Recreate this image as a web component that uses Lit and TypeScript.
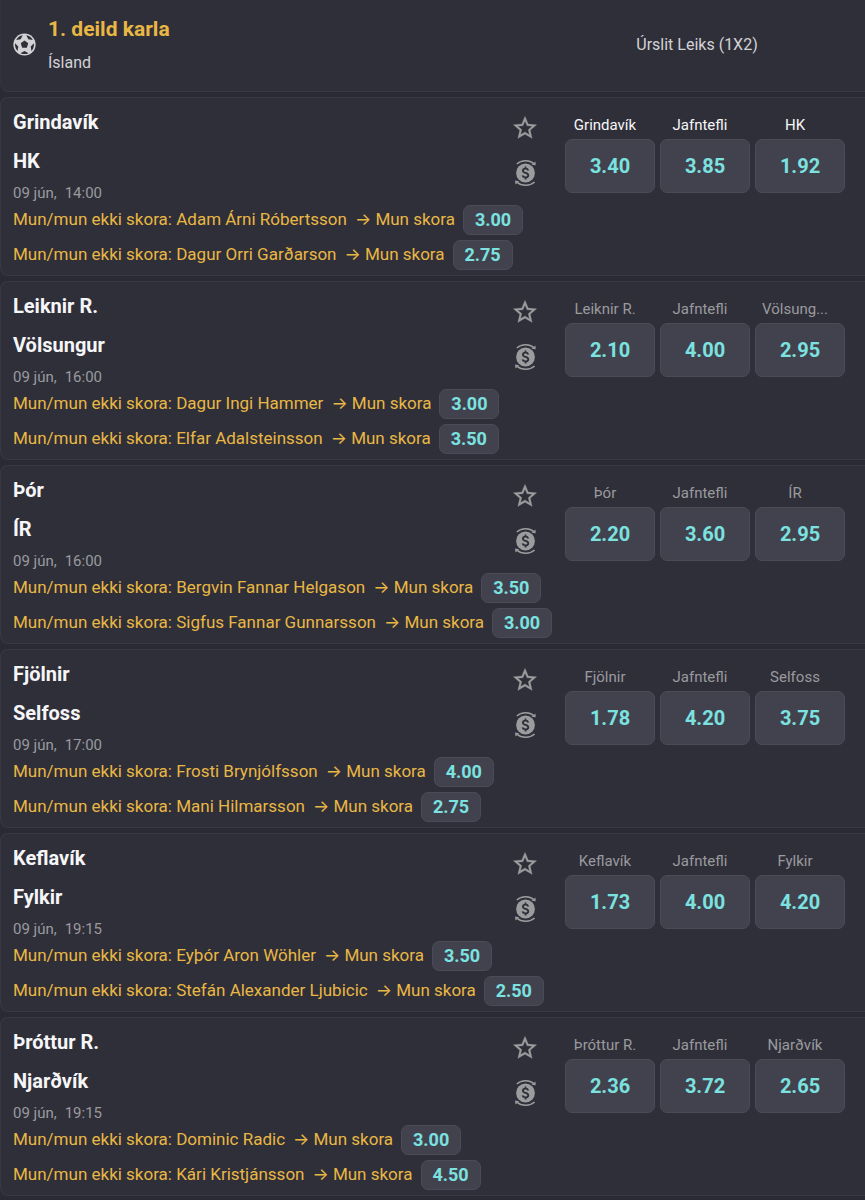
import { LitElement, html, css, svg } from "lit";
import { customElement, property } from "lit/decorators.js";

interface Prop {
  player: string;
  odds: string;
}

interface Match {
  home: string;
  away: string;
  date: string;
  time: string;
  live?: boolean;
  labels: string[];
  odds: string[];
  props: Prop[];
}

const MATCHES: Match[] = [
  {
    home: "Grindavík", away: "HK", date: "09 jún,", time: "14:00", live: true,
    labels: ["Grindavík", "Jafntefli", "HK"], odds: ["3.40", "3.85", "1.92"],
    props: [{ player: "Adam Árni Róbertsson", odds: "3.00" }, { player: "Dagur Orri Garðarson", odds: "2.75" }],
  },
  {
    home: "Leiknir R.", away: "Völsungur", date: "09 jún,", time: "16:00",
    labels: ["Leiknir R.", "Jafntefli", "Völsung..."], odds: ["2.10", "4.00", "2.95"],
    props: [{ player: "Dagur Ingi Hammer", odds: "3.00" }, { player: "Elfar Adalsteinsson", odds: "3.50" }],
  },
  {
    home: "Þór", away: "ÍR", date: "09 jún,", time: "16:00",
    labels: ["Þór", "Jafntefli", "ÍR"], odds: ["2.20", "3.60", "2.95"],
    props: [{ player: "Bergvin Fannar Helgason", odds: "3.50" }, { player: "Sigfus Fannar Gunnarsson", odds: "3.00" }],
  },
  {
    home: "Fjölnir", away: "Selfoss", date: "09 jún,", time: "17:00",
    labels: ["Fjölnir", "Jafntefli", "Selfoss"], odds: ["1.78", "4.20", "3.75"],
    props: [{ player: "Frosti Brynjólfsson", odds: "4.00" }, { player: "Mani Hilmarsson", odds: "2.75" }],
  },
  {
    home: "Keflavík", away: "Fylkir", date: "09 jún,", time: "19:15",
    labels: ["Keflavík", "Jafntefli", "Fylkir"], odds: ["1.73", "4.00", "4.20"],
    props: [{ player: "Eyþór Aron Wöhler", odds: "3.50" }, { player: "Stefán Alexander Ljubicic", odds: "2.50" }],
  },
  {
    home: "Þróttur R.", away: "Njarðvík", date: "09 jún,", time: "19:15",
    labels: ["Þróttur R.", "Jafntefli", "Njarðvík"], odds: ["2.36", "3.72", "2.65"],
    props: [{ player: "Dominic Radic", odds: "3.00" }, { player: "Kári Kristjánsson", odds: "4.50" }],
  },
];

@customElement("match-card")
class MatchCard extends LitElement {
  @property({ attribute: false }) match!: Match;

  static styles = css`
    :host { display: block; }
    .card {
      display: flex;
      align-items: flex-start;
      padding: 5px 20px 5px 12px;
      border: 1px solid #393943;
      border-right: none;
      border-radius: 8px 0 0 8px;
      background: #2f2f39;
    }
    button {
      font: inherit;
      margin: 0;
      padding: 0;
      cursor: pointer;
    }
    .info {
      flex: 1;
      min-width: 0;
      display: flex;
      flex-direction: column;
      gap: 1px;
    }
    .team {
      margin: 0;
      font-size: 20px;
      line-height: 38px;
      font-weight: 700;
      color: #f6f6f8;
    }
    .when {
      display: flex;
      gap: 8px;
      padding-top: 1px;
      font-size: 15px;
      line-height: 22px;
      color: #9a9a9f;
    }
    .props {
      list-style: none;
      margin: 0;
      padding: 0;
      display: flex;
      flex-direction: column;
      gap: 5px;
    }
    .prop {
      display: flex;
      height: 30px;
      font-size: 17px;
      line-height: 28px;
      font-weight: 400;
      color: #e9b744;
      white-space: nowrap;
    }
    .pick { margin: 0 8px; }
    .pill, .odd {
      box-sizing: border-box;
      border: 1px solid #4b4b57;
      background: #42424e;
      color: #7be2e0;
      font-weight: 700;
    }
    .pill {
      flex: none;
      width: 60px;
      border-radius: 7px;
      font-size: 18px;
      line-height: 28px;
    }
    .actions {
      width: 28px;
      padding-top: 11px;
      margin-right: 26px;
      display: flex;
      flex-direction: column;
      gap: 17px;
    }
    .icon {
      display: block;
      width: 28px;
      height: 28px;
      border: none;
      background: none;
      color: #9c9c9e;
    }
    .icon svg { display: block; width: 28px; height: 28px; }
    .market {
      display: grid;
      grid-template-columns: repeat(3, 90px);
      column-gap: 5px;
      padding-top: 11px;
    }
    .label {
      padding-right: 10px;
      font-size: 15px;
      line-height: 22px;
      margin-bottom: 3px;
      text-align: center;
      color: #9a9a9f;
      white-space: nowrap;
    }
    .live .label { color: #f6f6f8; }
    .odd {
      height: 54px;
      border-radius: 7px;
      font-size: 20px;
    }
  `;

  render() {
    const m = this.match;
    return html`
      <article class="card ${m.live ? "live" : ""}">
        <div class="info">
          <h2 class="team">${m.home}</h2>
          <h2 class="team">${m.away}</h2>
          <div class="when"><span>${m.date}</span><span>${m.time}</span></div>
          <ul class="props">
            ${m.props.map(
              (p) => html`<li class="prop">
                <span>Mun/mun ekki skora: ${p.player}</span>
                <span class="pick">→ Mun skora</span>
                <button class="pill">${p.odds}</button>
              </li>`
            )}
          </ul>
        </div>
        <div class="actions">
          <button class="icon" aria-label="Uppáhald">
            <svg viewBox="0 0 24 24" fill="currentColor" stroke="currentColor" stroke-width="0.2">
              <path d="M22 9.24l-7.19-.62L12 2 9.19 8.63 2 9.24l5.46 4.73L5.82 21 12 17.27 18.18 21l-1.63-7.03L22 9.24zM12 15.4l-3.76 2.27 1-4.28-3.32-2.88 4.38-.38L12 6.1l1.71 4.04 4.38.38-3.32 2.88 1 4.28L12 15.4z"></path>
            </svg>
          </button>
          <button class="icon" aria-label="Útborgun">
            <svg viewBox="0 0 28 28" fill="none" stroke="currentColor">
              <circle cx="14.5" cy="14" r="9.4" fill="currentColor" stroke="none"></circle>
              <path d="M5.8 5 C10.5 0.8 18.5 0.8 22.8 4.6" stroke-width="1.5"></path>
              <path d="M24.4 2.4 L24.7 6.3 L20.6 5.8 Z" fill="currentColor" stroke="none"></path>
              <path d="M23.6 23 C18.9 27.2 10.5 27.2 6.2 23.4" stroke-width="1.5"></path>
              <path d="M4.4 25.4 L4.1 21.6 L8.2 22.2 Z" fill="currentColor" stroke="none"></path>
              <path d="M17.3 11.4 C16.9 10.1 15.9 9.6 14.5 9.6 C12.9 9.6 11.9 10.4 11.9 11.7 C11.9 14.6 17.3 13.2 17.3 16.2 C17.3 17.6 16.1 18.4 14.5 18.4 C12.9 18.4 11.9 17.7 11.6 16.4 M14.5 7.6 V9.6 M14.5 18.4 V20.4" stroke="#2f2f39" stroke-width="1.8"></path>
            </svg>
          </button>
        </div>
        <div class="market">
          ${m.labels.map((l, i) => html`<span class="label" id="l${i}">${l}</span>`)}
          ${m.odds.map((o, i) => html`<button class="odd" id="o${i}" aria-labelledby="l${i} o${i}">${o}</button>`)}
        </div>
      </article>
    `;
  }
}

@customElement("app-root")
class AppRoot extends LitElement {
  static styles = css`
    :host {
      display: block;
      min-height: 100vh;
      background: #2a2a34;
      font-family: Roboto, Inter, sans-serif;
    }
    .league {
      display: flex;
      align-items: center;
      box-sizing: border-box;
      padding: 11px 20px 13px 12px;
      border-bottom: 1px solid #393943;
      border-left: 1px solid #33333d;
      border-radius: 0 0 0 8px;
      background: #2f2f39;
    }
    .ball { width: 23px; height: 23px; margin-right: 12px; }
    .names {
      flex: 1;
      display: flex;
      flex-direction: column;
      gap: 1px;
    }
    .title {
      margin: 0;
      font-size: 21px;
      line-height: 36px;
      font-weight: 700;
      color: #e9b744;
    }
    .country {
      margin: 0;
      font-size: 16px;
      line-height: 30px;
      color: #d2d2d6;
    }
    .market-name {
      width: 280px;
      padding-right: 16px;
      box-sizing: border-box;
      text-align: center;
      font-size: 16px;
      line-height: 24px;
      color: #d2d2d6;
    }
    .list {
      display: flex;
      flex-direction: column;
      gap: 5px;
      padding-top: 5px;
    }
  `;

  render() {
    return html`
      <header class="league">
        <svg class="ball" viewBox="0 0 24 24" aria-hidden="true">
          <circle cx="12" cy="12" r="11.6" fill="#d2d2d6"></circle>
          <g fill="#2f2f39">
            <path d="M12 7.9 L15.9 10.7 L14.4 15.3 H9.6 L8.1 10.7 Z"></path>
            ${[36, 108, 180, 252, 324].map(
              (a) => svg`<path transform="rotate(${a} 12 12)" d="M7.8 3 Q12 1 16.2 3 L12 5.2 Z"></path>`
            )}
          </g>
        </svg>
        <div class="names">
          <h1 class="title">1. deild karla</h1>
          <p class="country">Ísland</p>
        </div>
        <div class="market-name">Úrslit Leiks (1X2)</div>
      </header>
      <main class="list">
        ${MATCHES.map((m) => html`<match-card .match=${m}></match-card>`)}
      </main>
    `;
  }
}
